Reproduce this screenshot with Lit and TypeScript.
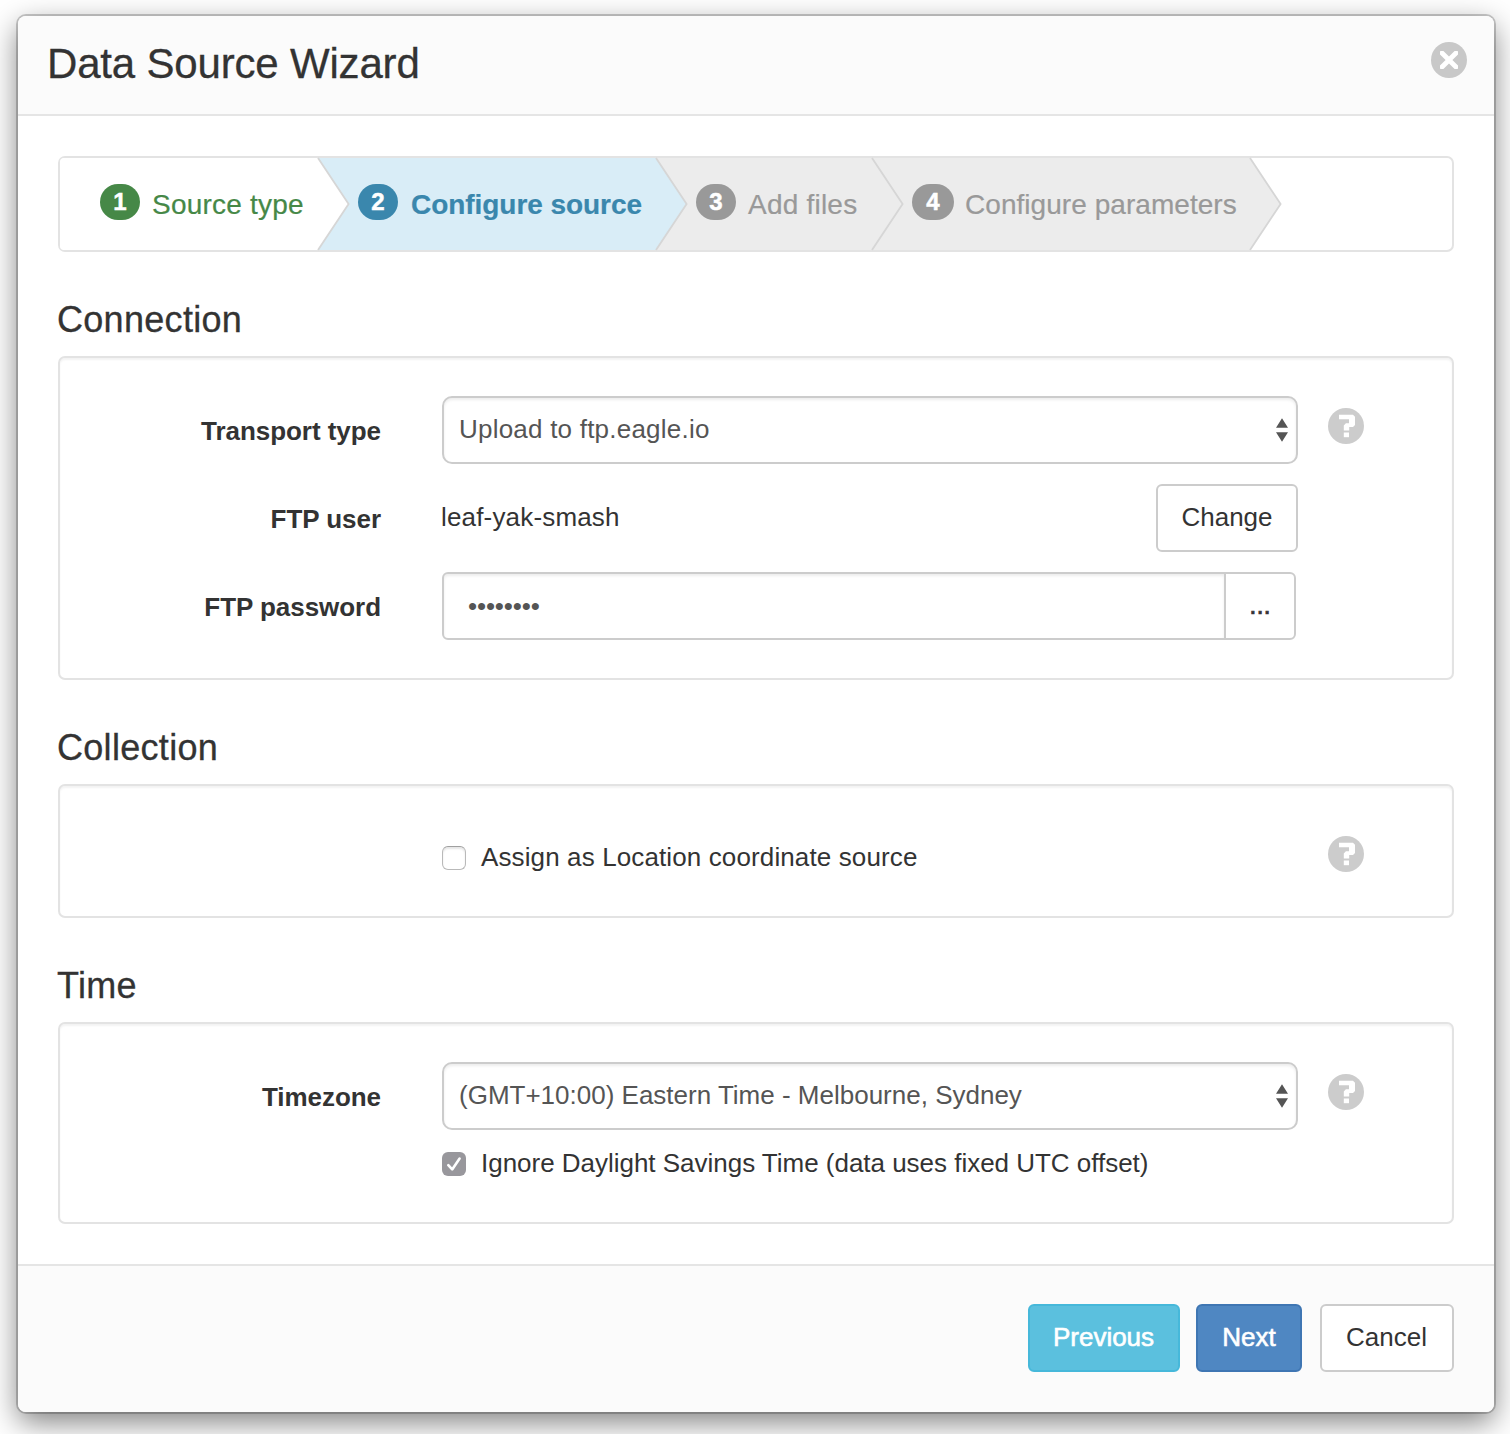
import { LitElement, html, css, svg, nothing } from "lit";
import { customElement, property, state } from "lit/decorators.js";
import { classMap } from "lit/directives/class-map.js";

type StepState = "done" | "active" | "pending";

interface Step {
  label: string;
  state: StepState;
}

@customElement("help-icon")
export class HelpIcon extends LitElement {
  static styles = css`
    :host { display: block; width: 36px; height: 36px; }
    svg { display: block; }
  `;

  render() {
    return html`<svg width="36" height="36" viewBox="0 0 36 36" role="img">
      <circle cx="18" cy="18" r="18" fill="#ccc" />
      <path fill="#fff" d="M11 6.8H25L27 8.8V17L25 19H21.2V22.4H15.8V17.4L17.9 15.3H21V11.3H11Z" />
      <rect x="15.8" y="24.5" width="5.2" height="4.7" fill="#fff" />
    </svg>`;
  }
}

@customElement("wizard-step")
export class WizardStep extends LitElement {
  @property({ type: Number }) number = 1;
  @property() label = "";
  @property({ reflect: true }) status: StepState = "pending";

  static styles = css`
    :host {
      display: flex;
      align-items: center;
      position: relative;
      box-sizing: border-box;
      height: 92px;
      padding-left: 40px;
      color: #999;
      background: #ececec;
      --fill: #ececec;
      --badge: #999;
    }
    :host([status="done"]) { color: #468847; background: #fff; --fill: #fff; --badge: #468847; border-radius: 4px 0 0 4px; }
    :host([status="active"]) { color: #3a87ad; background: #d9edf7; --fill: #d9edf7; --badge: #3a87ad; font-weight: bold; }
    .badge {
      box-sizing: border-box;
      width: 40px;
      height: 36px;
      margin-bottom: 4px;
      border-radius: 18px;
      background: var(--badge);
      color: #fff;
      font-weight: bold;
      font-size: 24px;
      line-height: 36px;
      text-align: center;
      -webkit-text-stroke: 0.5px #fff;
    }
    .badge.wide { width: 42px; margin-right: -1px; }
    .label { margin: 2px 0 0 12px; line-height: 40px; white-space: nowrap; letter-spacing: 0.22px; -webkit-text-stroke: 0.2px currentColor; }
    .badge.wide + .label { letter-spacing: 0.05px; }
    :host([status="active"]) .label { letter-spacing: -0.05px; margin-left: 13px; }
    .arrow { position: absolute; left: 100%; top: 0; overflow: visible; }
    .arrow .fill { fill: var(--fill); }
    .arrow .edge { fill: none; stroke: #d6d6d6; stroke-width: 1.8; }
  `;

  render() {
    return html`
      <span class=${classMap({ badge: true, wide: this.number === 4 })}>${this.number}</span>
      <span class="label">${this.label}</span>
      <svg class="arrow" width="32" height="92" viewBox="0 0 32 92">
        <path class="fill" d="M-1 0H0L31 46L0 92H-1Z" />
        <path class="edge" d="M0 0L30.6 46L0 92" />
      </svg>
    `;
  }
}

@customElement("check-box")
export class CheckBox extends LitElement {
  @property({ type: Boolean }) checked = false;
  @property() label = "";

  static styles = css`
    :host { display: flex; align-items: center; height: 30px; cursor: default; }
    .box {
      box-sizing: border-box;
      width: 24px;
      height: 24px;
      border: 1.5px solid #b9b9b9;
      border-top-color: #a0a0a0;
      border-radius: 6px;
      background: #fff;
      box-shadow: inset 0 2px 2px rgba(0, 0, 0, 0.1);
      flex: none;
    }
    .box.checked { border: 0; background: #98979c; box-shadow: none; }
    svg { display: block; }
    .label { margin: -2px 0 0 15px; white-space: nowrap; letter-spacing: 0.12px; }
    .checked + .label { letter-spacing: -0.02px; }
  `;

  render() {
    return html`
      <span class=${classMap({ box: true, checked: this.checked })}>
        ${this.checked
          ? html`<svg width="24" height="24" viewBox="0 0 24 24">${svg`<path d="M6.3 13.2L10.2 17.4L17.6 6.6" fill="none" stroke="#fff" stroke-width="2.6" stroke-linecap="round" stroke-linejoin="round" />`}</svg>`
          : nothing}
      </span>
      <span class="label">${this.label}</span>
    `;
  }
}

@customElement("select-box")
export class SelectBox extends LitElement {
  static styles = css`
    :host {
      display: flex;
      align-items: center;
      justify-content: space-between;
      box-sizing: border-box;
      height: 68px;
      padding: 0 8px 2px 15px;
      border: 2px solid #ccc;
      border-radius: 10px;
      background: #fff;
      color: #555;
      box-shadow: inset 0 2px 3px rgba(0, 0, 0, 0.075);
    }
    .value { white-space: nowrap; }
    svg { display: block; margin-top: 1px; }
  `;

  render() {
    return html`
      <span class="value"><slot></slot></span>
      <svg width="12" height="24" viewBox="0 0 12 24">
        <path d="M6 0.2L12 9.7H0Z M0 14.2H12L6 23.7Z" fill="#555" />
      </svg>
    `;
  }
}

@customElement("app-root")
export class AppRoot extends LitElement {
  @state() private steps: Step[] = [
    { label: "Source type", state: "done" },
    { label: "Configure source", state: "active" },
    { label: "Add files", state: "pending" },
    { label: "Configure parameters", state: "pending" },
  ];

  static styles = css`
    :host {
      display: block;
      box-sizing: border-box;
      width: 1510px;
      height: 1434px;
      padding: 16px 16px 22px 18px;
      overflow: hidden;
      background: #fff;
      color: #333;
      font: 26px/36px "Liberation Sans", Arial, Helvetica, sans-serif;
    }
    .dialog {
      display: flex;
      flex-direction: column;
      height: 1396px;
      border-radius: 8px;
      background: #fff;
      box-shadow: 0 0 0 2px rgba(0, 0, 0, 0.2), 0 10px 30px rgba(0, 0, 0, 0.5);
    }
    .header {
      display: flex;
      justify-content: space-between;
      box-sizing: border-box;
      height: 100px;
      padding: 18px 27px 0 29px;
      border-bottom: 2px solid #e5e5e5;
      border-radius: 8px 8px 0 0;
      background: #fbfbfb;
    }
    .title { margin: 0; font-size: 42px; line-height: 60px; font-weight: normal; letter-spacing: -0.18px; }
    .title, .heading { -webkit-text-stroke: 0.3px #333; }
    .close { margin-top: 8px; }
    .body { flex: 1; padding: 40px 40px 0; }
    .steps {
      display: grid;
      grid-template-columns: 258px 338px 216px 378px;
      height: 92px;
      border: 2px solid #e3e3e3;
      border-radius: 7px;
      font-size: 28px;
    }
    .step-1 { z-index: 4; }
    .step-2 { z-index: 3; }
    .step-3 { z-index: 2; }
    .step-4 { z-index: 1; }
    .heading { margin: 46px 0 14px -1px; font-size: 36px; line-height: 44px; font-weight: normal; letter-spacing: 0.3px; }
    .panel {
      display: grid;
      grid-template-columns: 321px 856px 36px;
      row-gap: 20px;
      padding: 38px 0;
      border: 2px solid #e3e3e3;
      border-radius: 7px;
      box-shadow: inset 0 2px 2px rgba(0, 0, 0, 0.05);
    }
    .panel > * { min-width: 0; }
    .name { font-weight: bold; text-align: right; line-height: 68px; padding-top: 1px; height: 67px; letter-spacing: -0.05px; }
    .control { margin-left: 61px; width: 856px; }
    .transport { letter-spacing: 0.22px; }
    .help { margin: 12px 0 0 91px; }
    .row { display: flex; align-items: center; justify-content: space-between; height: 68px; }
    .row .text { margin: -3px 0 0 -1px; letter-spacing: 0.17px; }
    .btn {
      box-sizing: border-box;
      height: 68px;
      padding: 0 0 3px;
      border: 2px solid #ccc;
      border-radius: 6px;
      background: #fff;
      color: #333;
      font: inherit;
    }
    .change { width: 142px; }
    .group { display: flex; width: 854px; }
    .password {
      display: flex;
      align-items: center;
      box-sizing: border-box;
      flex: 1;
      height: 68px;
      padding-left: 24px;
      border: 2px solid #ccc;
      border-radius: 6px 0 0 6px;
      color: #555;
      box-shadow: inset 0 2px 3px rgba(0, 0, 0, 0.075);
      letter-spacing: -0.15px;
    }
    .more { width: 72px; margin-left: -2px; border-radius: 0 6px 6px 0; -webkit-text-stroke: 0.7px #333; }
    .collection { padding: 38px 0; height: 54px; }
    .collection .check { margin-top: 19px; display: flex; }
    .time { row-gap: 0; height: 122px; grid-template-rows: 68px 1fr; }
    .time .check { grid-column: 2; margin-top: 19px; display: flex; }
    .footer {
      display: flex;
      justify-content: flex-end;
      box-sizing: border-box;
      height: 148px;
      padding: 38px 40px 0;
      border-top: 2px solid #e5e5e5;
      border-radius: 0 0 8px 8px;
      background: #fbfbfb;
    }
    .previous { width: 152px; background: #5bc0de; border-color: #46b8da; color: #fff; padding-right: 1px; -webkit-text-stroke: 0.6px #fff; }
    .next { width: 106px; margin-left: 16px; background: #4f87c2; border-color: #3f76b3; color: #fff; -webkit-text-stroke: 0.6px #fff; }
    .cancel { width: 134px; margin-left: 18px; padding-right: 1px; }
  `;

  render() {
    return html`
      <div class="dialog">
        <header class="header">
          <h1 class="title">Data Source Wizard</h1>
          <svg class="close" width="36" height="36" viewBox="0 0 36 36">
            <circle cx="18" cy="18" r="18" fill="#c8c8c8" />
            <path d="M9 9.6L9.6 9H12.4L18 14.6L23.6 9H26.4L27 9.6V12.4L21.4 18L27 23.6V26.4L26.4 27H23.6L18 21.4L12.4 27H9.6L9 26.4V23.6L14.6 18L9 12.4Z" fill="#fff" />
          </svg>
        </header>
        <main class="body">
          <nav class="steps">
            ${this.steps.map(
              (s, i) => html`<wizard-step class="step-${i + 1}" .number=${i + 1} .label=${s.label} status=${s.state}></wizard-step>`
            )}
          </nav>

          <h2 class="heading">Connection</h2>
          <section class="panel">
            <div class="name">Transport type</div>
            <select-box class="control transport">Upload to ftp.eagle.io</select-box>
            <help-icon class="help"></help-icon>
            <div class="name">FTP user</div>
            <div class="control row">
              <span class="text">leaf-yak-smash</span>
              <button class="btn change">Change</button>
            </div>
            <div></div>
            <div class="name">FTP password</div>
            <div class="control group">
              <div class="password">••••••••</div>
              <button class="btn more">...</button>
            </div>
          </section>

          <h2 class="heading">Collection</h2>
          <section class="panel collection">
            <div></div>
            <check-box class="control check" label="Assign as Location coordinate source"></check-box>
            <help-icon class="help"></help-icon>
          </section>

          <h2 class="heading">Time</h2>
          <section class="panel time">
            <div class="name">Timezone</div>
            <select-box class="control">(GMT+10:00) Eastern Time - Melbourne, Sydney</select-box>
            <help-icon class="help"></help-icon>
            <check-box class="control check" checked label="Ignore Daylight Savings Time (data uses fixed UTC offset)"></check-box>
          </section>
        </main>
        <footer class="footer">
          <button class="btn previous">Previous</button>
          <button class="btn next">Next</button>
          <button class="btn cancel">Cancel</button>
        </footer>
      </div>
    `;
  }
}
